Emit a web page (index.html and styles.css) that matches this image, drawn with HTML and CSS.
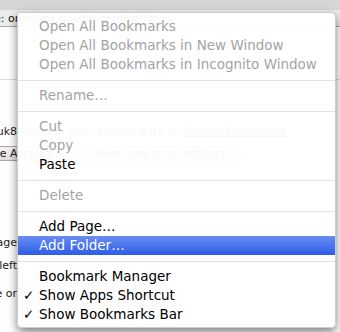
FILE: index.html
```
<!DOCTYPE html>
<html lang="en">

<head>
  <meta charset="UTF-8" />
  <title>Bookmarks menu</title>
  <link rel="stylesheet" href="styles.css">
</head>

<body>
  <div class="tabstrip"></div>
  <div class="toolbar"><span class="address">e: omnibox.google.com/settings</span></div>

  <div class="page">
    <div class="rule"></div>
    <div class="synced">
      <span class="clip">kuk8</span>
      <span class="manage">Manage your synced data on <u>Google Dashboard</u>.</span>
    </div>
    <div class="actions">
      <button class="btn first">Disconnect your Google Account…</button>
      <button class="btn">Advanced sync settings…</button>
    </div>
    <p class="line one"><span class="clip">Show Home page</span></p>
    <p class="line two"><span class="clip">left</span></p>
    <p class="line three"><span class="clip">Use a prediction service or</span></p>
  </div>

  <ul class="menu">
    <li class="off"><span class="tick"></span>Open All Bookmarks</li>
    <li class="off"><span class="tick"></span>Open All Bookmarks in New Window</li>
    <li class="off"><span class="tick"></span>Open All Bookmarks in Incognito Window</li>
    <li class="sep"></li>
    <li class="off"><span class="tick"></span>Rename…</li>
    <li class="sep"></li>
    <li class="off"><span class="tick"></span>Cut</li>
    <li class="off"><span class="tick"></span>Copy</li>
    <li><span class="tick"></span>Paste</li>
    <li class="sep"></li>
    <li class="off"><span class="tick"></span>Delete</li>
    <li class="sep"></li>
    <li><span class="tick"></span>Add Page…</li>
    <li class="active"><span class="tick"></span>Add Folder…</li>
    <li class="sep"></li>
    <li><span class="tick"></span>Bookmark Manager</li>
    <li><span class="tick">✓</span>Show Apps Shortcut</li>
    <li><span class="tick">✓</span>Show Bookmarks Bar</li>
  </ul>
</body>

</html>
```

FILE: styles.css
```
:root {
  --menu-text: #000;
  --menu-off: #a3a3a3;
  --menu-line: #e2e2e2;
  --hilite: linear-gradient(#6a8df0, #2c5ce9);
}

body {
  margin: 0;
  width: 340px;
  height: 332px;
  overflow: hidden;
  position: relative;
  background: #fff;
  font-family: 'DejaVu Sans', sans-serif;
  color: #222;
}

.tabstrip {
  height: 10px;
  background: #d6d6d6;
}

.toolbar {
  height: 16px;
  background: #ececec;
  border-bottom: 1px solid #a8a8a8;
  font-size: 11px;
  line-height: 17px;
  white-space: nowrap;
  overflow: hidden;
}

.address {
  display: inline-block;
  margin-left: -6px;
  color: #111;
}

.page {
  font-size: 11px;
  white-space: nowrap;
}

.clip {
  width: 17px;
  flex: none;
  overflow: hidden;
  display: flex;
  justify-content: flex-end;
}

.rule {
  height: 1px;
  margin-top: 52px;
  background: #dddddd;
}

.synced {
  display: flex;
  margin-top: 45px;
  line-height: 14px;
}

.manage {
  margin-left: 4px;
}

.actions {
  display: flex;
  gap: 10px;
  margin-top: 7px;
}

.btn {
  height: 15px;
  padding: 0 8px;
  font: inherit;
  line-height: 13px;
  color: #222;
  background: linear-gradient(#f4f4f4, #dedede);
  border: 1px solid #a6a6a6;
  border-radius: 3px;
}

.btn.first {
  margin-left: -134px;
}

.line {
  margin: 0;
  line-height: 15px;
}

.line.one {
  margin-top: 74px;
}

.line.two {
  margin-top: 8px;
}

.line.three {
  margin-top: 13px;
}

.menu {
  position: absolute;
  left: 17px;
  top: 12px;
  width: 319px;
  margin: 0;
  padding: 4px 0 3px;
  list-style: none;
  box-sizing: border-box;
  background: rgba(255, 255, 255, 0.96);
  border: 1px solid rgba(0, 0, 0, 0.2);
  border-radius: 2px 5px 5px 5px;
  box-shadow: 0 4px 10px rgba(0, 0, 0, 0.5);
  font-size: 13.5px;
  color: var(--menu-text);
}

.menu li {
  height: 19px;
  line-height: 19px;
  padding-left: 5px;
  display: flex;
  white-space: nowrap;
}

.menu .tick {
  width: 16px;
  flex: none;
}

.menu .off {
  color: var(--menu-off);
}

.menu .sep {
  height: 12px;
  padding: 0;
  position: relative;
}

.menu .sep::after {
  content: "";
  position: absolute;
  left: 0;
  right: 0;
  top: 6px;
  height: 1px;
  background: var(--menu-line);
}

.menu .active {
  background: var(--hilite);
  color: #fff;
}
```
